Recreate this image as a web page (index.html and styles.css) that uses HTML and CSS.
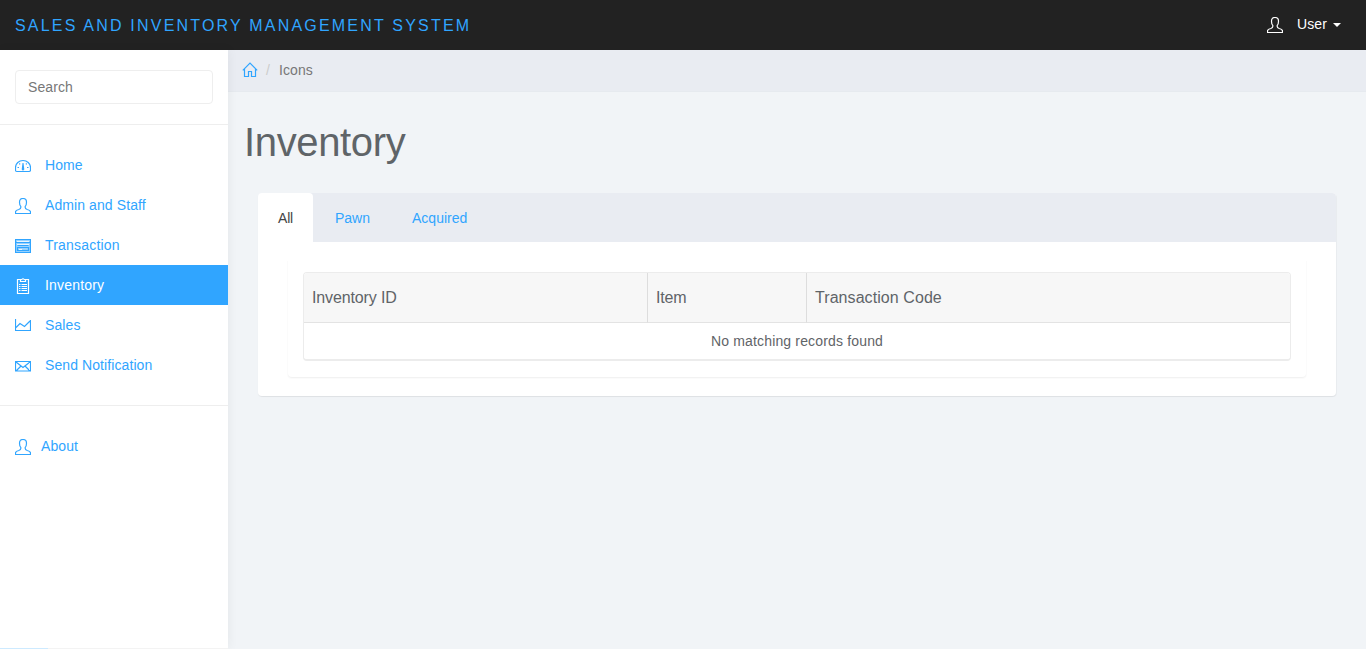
FILE: index.html
```html
<!DOCTYPE html>
<html lang="en">
<head>
<meta charset="utf-8">
<title>Inventory</title>
<link rel="stylesheet" href="styles.css">
</head>
<body>
<svg class="symbols" aria-hidden="true">
  <symbol id="user" viewBox="0 0 16 16"><path d="M5.8 9.6V8.4C4.8 7.4 4.5 6 4.5 4.2 4.5 1.700 5.800.5 8 .5s3.500 1.200 3.500 3.700c0 1.800-.3 3.200-1.300 4.200v1.200c0 1.100.7 1.500 2 1.900 2.200.6 3.300 1 3.300 2.500v1.500H.5V14c0-1.500 1.100-1.900 3.300-2.500 1.300-.4 2-.8 2-1.900z"/></symbol>
  <symbol id="gauge" viewBox="0 0 16 16"><path d="M2 13.500Q.5 13.500.5 12V9.500C.5 5.500 4 2.500 8 2.500s7.500 3 7.500 7V12q0 1.500-1.500 1.500zM2.500 9.500H4m8 0h1.500M4.300 5.500l.8.8m6.600-.8-.8.800"/><path class="solid" d="M7.500 5h1l.8 6.500L8 12.800l-1.300-1.300z"/></symbol>
</svg>
<header class="topbar">
  <a class="brand">Sales and Inventory Management System</a>
  <div class="account">
    <svg class="icon"><use href="#user"/></svg>
    <span>User</span><i class="caret"></i>
  </div>
</header>
<div class="shell">
  <aside class="sidebar">
    <form class="search"><input type="text" placeholder="Search"></form>
    <nav class="menu">
      <a><svg class="icon"><use href="#gauge"/></svg>Home</a>
      <a><svg class="icon"><use href="#user"/></svg>Admin and Staff</a>
      <a class="wide"><svg class="icon" viewBox="0 0 16 16"><path class="tint" d="M1 2h14v12H1z"/><path d="M.5 1.500h15v13H.5zM1 4.500h14M2.500 7.500h11M2.500 9.500h11v3h-11z"/><path class="light" d="M4 11.500h3M2 3.500h12M2 6.500h12"/></svg>Transaction</a>
      <a class="active wide"><svg class="icon" viewBox="0 0 16 16"><path d="M5 1.500H2.500v14h11v-14H11M5.500 3.500v-2h1.300Q8 0 9.200 1.500h1.300v2zM6.500 6.500H12m-5.500 2H12m-5.500 2H12m-5.500 2H12M4 6.500h1.500M4 8.500h1.500M4 10.500h1.500M4 12.500h1.500"/></svg>Inventory</a>
      <a><svg class="icon" viewBox="0 0 16 16"><path d="M.5 1v11.500h15V2M1 9.500l4-4 4.500 3L15 3"/></svg>Sales</a>
      <a><svg class="icon" viewBox="0 0 16 16"><path d="M.5 3.500h15v9.500H.5zM1 4l7 5.500L15 4M1 13l5-5m9 5-5-5"/></svg>Send Notification</a>
    </nav>
    <nav class="menu about">
      <a><svg class="icon"><use href="#user"/></svg>About</a>
    </nav>
  </aside>
  <main class="main">
    <div class="crumbs">
      <svg class="home" viewBox="0 0 16 16"><path d="M.8 8.300 8 1l7.200 7.300M2.500 7v7.500h4v-5h3v5h4V7"/></svg>
      <span class="slash">/</span><span>Icons</span>
    </div>
    <h1>Inventory</h1>
    <section class="panel">
      <div class="tabs"><a class="current">All</a><a>Pawn</a><a>Acquired</a></div>
      <div class="pane">
        <table>
          <thead><tr><th class="c1">Inventory ID</th><th class="c2">Item</th><th class="c3">Transaction Code</th></tr></thead>
          <tbody><tr><td colspan="3">No matching records found</td></tr></tbody>
        </table>
      </div>
    </section>
  </main>
</div>
<div class="status"></div>
</body>
</html>
```
FILE: styles.css
```css
* { box-sizing: border-box; }
body { margin: 0; height: 649px; overflow: hidden; background: #f1f4f7; color: #5f6468; font: 14px/20px "Liberation Sans", Arial, sans-serif; }
.symbols { position: absolute; width: 0; height: 0; }
.icon { width: 16px; height: 16px; flex: none; }
.icon, .home { fill: none; stroke: currentColor; stroke-width: 1.2; }
.solid { fill: currentColor; stroke: none; }
.tint { fill: #30a5ff; fill-opacity: .5; stroke: none; }
.light { stroke: #fff; stroke-width: .8; }
.topbar { height: 50px; background: #222; display: flex; justify-content: space-between; padding: 0 25px 0 15px; }
.brand { color: #30a5ff; font-size: 16px; line-height: 51px; letter-spacing: 2.2px; text-transform: uppercase; }
.account { color: #fff; display: flex; align-items: center; padding-bottom: 2px; letter-spacing: .1px; }
.account .icon { margin: 1px 14px 0 0; }
.caret { border: 4px solid transparent; border-top-color: #fff; border-bottom: 0; margin: 2px 0 0 6px; }
.shell { display: flex; height: 599px; }
.sidebar { width: 228px; flex: none; background: #fff; box-shadow: 1px 0 10px rgba(0,0,0,.05); position: relative; z-index: 1; }
.search { padding: 20px 15px; height: 75px; border-bottom: 1px solid #eee; }
.search input { display: block; width: 198px; height: 34px; border: 1px solid #eee; border-radius: 4px; padding: 6px 12px; font: inherit; letter-spacing: .1px; }
.search input::placeholder { color: #777; opacity: 1; }
.menu { padding: 20px 0; border-bottom: 1px solid #eee; letter-spacing: .09px; }
.menu a { display: flex; height: 40px; align-items: center; padding: 0 15px; gap: 14px; color: #30a5ff; }
.menu .wide { letter-spacing: .19px; }
.menu .icon { margin-top: 2px; }
.menu a.active { background: #30a5ff; color: #fff; }
.menu + .menu { border: 0; }
.menu:first-of-type { height: 281px; }
.menu.about a { gap: 10px; }
.main { flex: 1; min-width: 0; }
.crumbs { height: 42px; background: #e9ecf2; border-bottom: 1px solid #e6eaef; display: flex; align-items: center; padding: 0 14px 1px; color: #777; letter-spacing: .1px; }
.home { width: 16px; height: 16px; color: #30a5ff; }
.slash { color: #ccc; margin: 0 9px 0 8px; }
h1 { margin: 28px 0 0 16px; font-size: 40px; line-height: 44px; font-weight: 400; letter-spacing: -.35px; }
.panel { margin: 29px 30px 0; background: #fff; border-radius: 4px; box-shadow: 0 1px 1px rgba(0,0,0,.05), 1px 1px 1px rgba(0,0,0,.03); height: 203px; }
.tabs { height: 49px; background: #e9ecf2; border-radius: 4px 4px 0 0; display: flex; line-height: 50px; color: #30a5ff; }
.tabs a { padding: 0 20px; margin-right: 2px; }
.tabs .current { width: 55px; background: #fff; color: #444; border-radius: 4px 4px 0 0; letter-spacing: -.2px; }
.pane { margin: 15px 30px 0; padding: 15px; height: 120px; border-radius: 4px; box-shadow: 0 1px 2px rgba(0,0,0,.07); clip-path: inset(4px -2px -3px -2px); }
table { width: 100%; height: 89px; table-layout: fixed; border-collapse: separate; border-spacing: 0; border: 1px solid #ececec; border-bottom-width: 2px; border-radius: 4px; overflow: hidden; }
th { height: 50px; padding: 0 8px; background: #f7f7f7; border-right: 1px solid #ddd; border-bottom: 1px solid #e3e3e3; text-align: left; font-size: 16px; font-weight: 400; }
th:last-child { border-right: 0; }
.c1 { width: 344px; letter-spacing: -.13px; }
.c2 { width: 159px; letter-spacing: -.15px; }
.c3 { letter-spacing: .07px; }
td { padding: 0; text-align: center; letter-spacing: .16px; }
.status { position: absolute; left: 0; top: 648px; width: 228px; height: 1px; background: linear-gradient(90deg, #cdeaff 48px, #f3f3f3 48px); z-index: 2; }
```
